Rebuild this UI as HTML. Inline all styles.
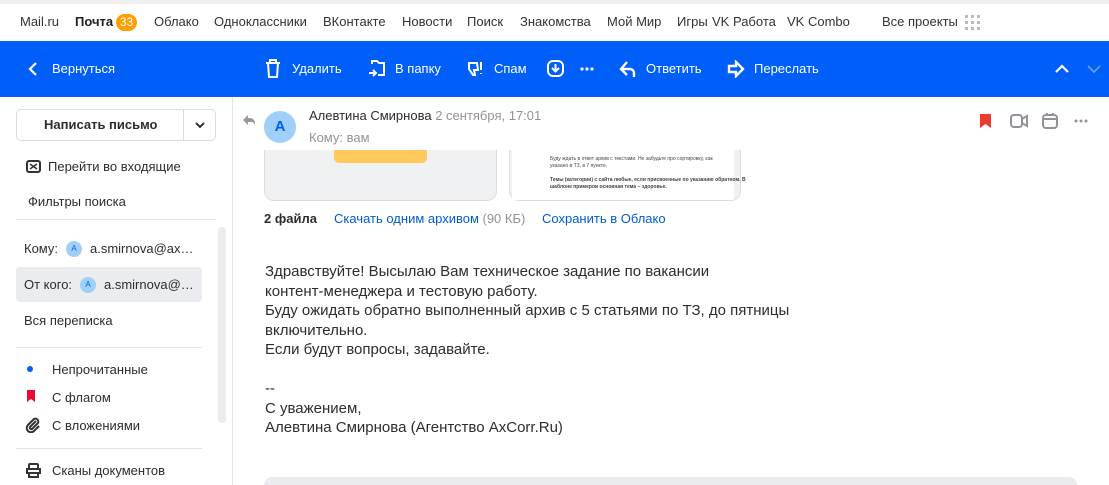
<!DOCTYPE html><html><head><meta charset="utf-8"><style>
*{margin:0;padding:0;box-sizing:border-box}
body{width:1109px;height:485px;overflow:hidden;font-family:"Liberation Sans",sans-serif;background:#fff;position:relative;color:#2c2d2e}
.a{position:absolute;white-space:nowrap}
.nav{font-size:13px;top:14px;color:#333}
.tb{position:absolute;left:0;top:41px;width:1109px;height:56px;background:#005ff9}
.t{color:#fff;font-size:13px;top:61px}
.s{font-size:13px;color:#2c2d2e}
.b{font-size:15px;color:#2c2d2e}
</style></head><body>
<div class="a" style="left:0;top:0;width:1109px;height:4px;background:#f0f0f0"></div>
<div class="a nav" style="left:20px">Mail.ru</div>
<div class="a nav" style="left:75px;font-weight:bold;color:#222">Почта</div>
<div class="a" style="left:116px;top:14px;width:21px;height:17px;border-radius:9px;background:#ff9e00;color:#fff;font-size:12px;text-align:center;line-height:17px">33</div>
<div class="a nav" style="left:154px">Облако</div>
<div class="a nav" style="left:214px">Одноклассники</div>
<div class="a nav" style="left:323px">ВКонтакте</div>
<div class="a nav" style="left:402px">Новости</div>
<div class="a nav" style="left:467px">Поиск</div>
<div class="a nav" style="left:520px">Знакомства</div>
<div class="a nav" style="left:607px">Мой Мир</div>
<div class="a nav" style="left:677px">Игры</div>
<div class="a nav" style="left:712px">VK Работа</div>
<div class="a nav" style="left:787px">VK Combo</div>
<div class="a nav" style="left:882px">Все проекты</div>
<svg class="a" style="left:965px;top:15px" width="15" height="15"><g fill="#bbb"><rect x="0" y="0" width="3" height="3"/><rect x="6" y="0" width="3" height="3"/><rect x="12" y="0" width="3" height="3"/><rect x="0" y="6" width="3" height="3"/><rect x="6" y="6" width="3" height="3"/><rect x="12" y="6" width="3" height="3"/><rect x="0" y="12" width="3" height="3"/><rect x="6" y="12" width="3" height="3"/><rect x="12" y="12" width="3" height="3"/></g></svg>
<div class="tb"></div>
<svg class="a" style="left:28px;top:62px" width="12" height="14"><path d="M8 1L2 7l6 6" stroke="#fff" stroke-width="2.2" fill="none"/></svg>
<div class="a t" style="left:52px">Вернуться</div>
<svg class="a" style="left:265px;top:59px" width="16" height="20" fill="none" stroke="#fff" stroke-width="2"><path d="M1 4h14M5 4V1h6v3M3 4l1 14h8l1-14"/></svg>
<div class="a t" style="left:292px">Удалить</div>
<svg class="a" style="left:368px;top:59px" width="18" height="20" fill="none" stroke="#fff" stroke-width="2"><path d="M4 5V2h5l2 2h5v12h-6M1 14h7M5 11l3 3-3 3"/></svg>
<div class="a t" style="left:395px">В папку</div>
<svg class="a" style="left:467px;top:60px" width="18" height="18" fill="none" stroke="#fff" stroke-width="2"><path d="M2 3h8l1 7H7l1 5H6L2 9zM14 2v8M14 13v1"/></svg>
<div class="a t" style="left:494px">Спам</div>
<svg class="a" style="left:547px;top:60px" width="18" height="18" fill="none" stroke="#fff" stroke-width="2"><rect x="1" y="1" width="15" height="15" rx="5"/><path d="M8.5 4v7M5 8l3.5 3.5L12 8"/></svg>
<svg class="a" style="left:580px;top:67px" width="14" height="4" fill="#fff"><circle cx="2" cy="2" r="1.6"/><circle cx="7" cy="2" r="1.6"/><circle cx="12" cy="2" r="1.6"/></svg>
<svg class="a" style="left:619px;top:60px" width="18" height="18" fill="none" stroke="#fff" stroke-width="2.4"><path d="M8 2L2 9l6 6M3 9h8a4 4 0 0 1 4 4v4"/></svg>
<div class="a t" style="left:646px">Ответить</div>
<svg class="a" style="left:727px;top:60px" width="18" height="18" fill="none" stroke="#fff" stroke-width="2.4"><path d="M9 2l7 7-7 7v-4H2V6h7z"/></svg>
<div class="a t" style="left:754px">Переслать</div>
<svg class="a" style="left:1055px;top:64px" width="14" height="10"><path d="M1 8l6-6 6 6" stroke="#fff" stroke-width="2.2" fill="none"/></svg>
<svg class="a" style="left:1087px;top:64px" width="14" height="10"><path d="M1 2l6 6 6-6" stroke="#6a9ff8" stroke-width="1.6" fill="none"/></svg>
<!-- sidebar -->
<div class="a" style="left:232px;top:97px;width:1px;height:388px;background:#e5e5e5"></div>
<div class="a" style="left:16px;top:109px;width:200px;height:32px;border:1px solid #dcdcdc;border-radius:5px"></div>
<div class="a" style="left:183px;top:109px;width:1px;height:32px;background:#dcdcdc"></div>
<div class="a s" style="left:44px;top:117px;font-weight:bold">Написать письмо</div>
<svg class="a" style="left:195px;top:121px" width="10" height="8"><path d="M1 2l4 4 4-4" stroke="#333" stroke-width="2" fill="none"/></svg>
<svg class="a" style="left:26px;top:160px" width="15" height="13"><rect x="1" y="1" width="13" height="11" rx="2" fill="none" stroke="#333" stroke-width="2"/><path d="M4 4l7 5M11 4L4 9" stroke="#333" stroke-width="1.5"/></svg>
<div class="a s" style="left:48px;top:159px">Перейти во входящие</div>
<div class="a s" style="left:28px;top:194px">Фильтры поиска</div>
<div class="a" style="left:16px;top:219px;width:200px;height:1px;background:#e3e3e3"></div>
<div class="a" style="left:218px;top:227px;width:8px;height:196px;border-radius:4px;background:#ececec"></div>
<div class="a s" style="left:24px;top:241px">Кому:</div>
<div class="a" style="left:66px;top:241px;width:16px;height:16px;border-radius:50%;background:#9ed0f9;color:#005ff9;font-size:8px;text-align:center;line-height:16px">A</div>
<div class="a s" style="left:90px;top:241px">a.smirnova@ax…</div>
<div class="a" style="left:16px;top:267px;width:186px;height:35px;border-radius:4px;background:#ebecef"></div>
<div class="a s" style="left:24px;top:277px">От кого:</div>
<div class="a" style="left:80px;top:277px;width:16px;height:16px;border-radius:50%;background:#9ed0f9;color:#005ff9;font-size:8px;text-align:center;line-height:16px">A</div>
<div class="a s" style="left:104px;top:277px">a.smirnova@…</div>
<div class="a s" style="left:24px;top:313px">Вся переписка</div>
<div class="a" style="left:16px;top:347px;width:186px;height:1px;background:#e3e3e3"></div>
<div class="a" style="left:27px;top:366px;width:6px;height:6px;border-radius:50%;background:#005ff9"></div>
<div class="a s" style="left:52px;top:362px">Непрочитанные</div>
<svg class="a" style="left:27px;top:390px" width="8" height="12"><path d="M0 0h8v12L4 9 0 12z" fill="#ed0a34"/></svg>
<div class="a s" style="left:52px;top:390px">С флагом</div>
<svg class="a" style="left:25px;top:417px" width="16" height="16" fill="none" stroke="#333" stroke-width="2"><path d="M11 4L5 10a1.5 1.5 0 0 0 2 2l6-6a3 3 0 0 0-4-4L3 8a4.2 4.2 0 0 0 6 6l5-5"/></svg>
<div class="a s" style="left:52px;top:418px">С вложениями</div>
<div class="a" style="left:16px;top:448px;width:186px;height:1px;background:#e3e3e3"></div>
<svg class="a" style="left:26px;top:463px" width="15" height="15" fill="none" stroke="#333" stroke-width="2"><rect x="3" y="1" width="9" height="5" rx="1"/><rect x="1" y="6" width="13" height="4"/><rect x="3" y="10" width="9" height="4"/></svg>
<div class="a s" style="left:52px;top:463px">Сканы документов</div>
<!-- main -->
<svg class="a" style="left:242px;top:114px" width="14" height="12"><path d="M6 1L1 6l5 5V8h3a4 4 0 0 1 4 3V9a5 5 0 0 0-5-5H6z" fill="#999"/></svg>
<div class="a" style="left:264px;top:111px;width:32px;height:32px;border-radius:50%;background:#9ed0f9;color:#005ff9;font-size:15px;font-weight:bold;text-align:center;line-height:32px">A</div>
<div class="a" style="left:309px;top:108px;font-size:13px;color:#2c2d2e">Алевтина Смирнова <span style="color:#919399">2 сентября, 17:01</span></div>
<div class="a" style="left:309px;top:130px;font-size:13px;color:#919399">Кому: вам</div>
<svg class="a" style="left:980px;top:114px" width="12" height="15"><path d="M0 0h11v14l-5.5-4L0 14z" fill="#ed3c2f"/></svg>
<svg class="a" style="left:1010px;top:113px" width="18" height="16" fill="none" stroke="#919399" stroke-width="2"><rect x="1" y="2" width="11" height="12" rx="3"/><path d="M12 6l5-3v10l-5-3"/></svg>
<svg class="a" style="left:1042px;top:112px" width="16" height="17" fill="none" stroke="#919399" stroke-width="2"><rect x="1" y="3" width="14" height="13" rx="3"/><path d="M1 7h14M5 1v3M11 1v3"/></svg>
<svg class="a" style="left:1074px;top:119px" width="14" height="4" fill="#919399"><circle cx="2" cy="2" r="1.5"/><circle cx="7" cy="2" r="1.5"/><circle cx="12" cy="2" r="1.5"/></svg>
<div class="a" style="left:264px;top:150px;width:233px;height:51px;background:#f0f1f3;border:1px solid #dedede;border-top:none;border-radius:0 0 10px 10px"></div>
<div class="a" style="left:334px;top:150px;width:93px;height:13px;background:#ffc95d;border-radius:0 0 5px 5px"></div>
<div class="a" style="left:509px;top:150px;width:232px;height:51px;background:#f0f1f3;border:1px solid #dedede;border-top:none;border-radius:0 0 10px 10px"></div>
<div class="a" style="left:512px;top:150px;width:222px;height:50px;background:#fff"></div>
<div class="a" style="left:550px;top:156px;font-size:5px;color:#444;line-height:7px">Буду ждать в ответ архив с текстами. Не забудьте про сортировку, как<br>указано в ТЗ, в 7 пункте.<br><br><b>Темы (категории) с сайта любые, если присвоенные по указанию обратном. В<br>шаблоне примеров основная тема – здоровье.</b></div>
<div class="a" style="left:264px;top:211px;font-size:13px;font-weight:bold;color:#2c2d2e">2 файла</div>
<div class="a" style="left:334px;top:211px;font-size:13px;color:#005bd1">Скачать одним архивом <span style="color:#919399">(90 КБ)</span></div>
<div class="a" style="left:542px;top:211px;font-size:13px;color:#005bd1">Сохранить в Облако</div>
<div class="a b" style="left:265px;top:262px;line-height:19.5px">Здравствуйте! Высылаю Вам техническое задание по вакансии<br>контент-менеджера и тестовую работу.<br>Буду ожидать обратно выполненный архив с 5 статьями по ТЗ, до пятницы<br>включительно.<br>Если будут вопросы, задавайте.<br><br>--<br>С уважением,<br>Алевтина Смирнова (Агентство AxCorr.Ru)</div>
<div class="a" style="left:264px;top:477px;width:813px;height:8px;border-radius:8px 8px 0 0;background:#ebecef"></div>
</body></html>
